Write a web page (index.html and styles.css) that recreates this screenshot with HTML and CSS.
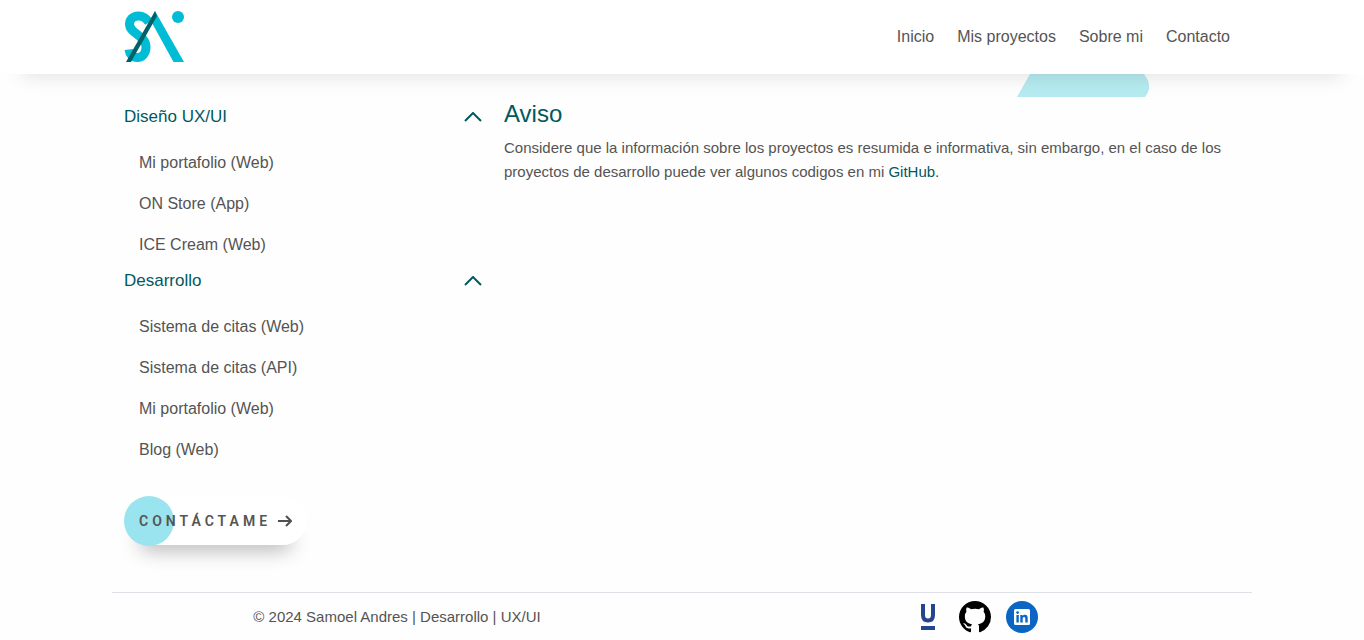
FILE: index.html
```html
<!DOCTYPE html>
<html lang="es">
<head>
<meta charset="utf-8">
<meta name="viewport" content="width=device-width, initial-scale=1">
<title>Samoel Andres | Mis proyectos</title>
<link rel="stylesheet" href="styles.css">
</head>
<body>
<header class="site-header">
  <div class="container header-row">
    <a class="brand" href="#" aria-label="Samoel Andres">
      <svg class="logo" viewBox="0 0 60 52" aria-hidden="true">
        <path d="M25 11.500C22 6.500 18.500 5 14.500 5C8.500 5 5.500 9 5.500 13C5.500 23 22 24 22 36C22 42 18.500 46.500 13 46.500C8.500 46.500 5.500 43 5 38.500" fill="none" stroke="#00bcd4" stroke-width="9"/>
        <path d="M31 0L60 51H49.500L27.500 11Z" fill="#00bcd4"/>
        <path d="M31 0L33 5L7 51H2Z" fill="#00606a"/>
        <circle cx="54" cy="6" r="6" fill="#00bcd4"/>
      </svg>
    </a>
    <nav class="main-nav">
      <a href="#">Inicio</a>
      <a href="#">Mis proyectos</a>
      <a href="#">Sobre mi</a>
      <a href="#">Contacto</a>
    </nav>
  </div>
</header>
<main class="container content">
  <svg class="decoration" viewBox="0 0 132 23" aria-hidden="true"><path d="M13 0H127Q137 12 128 23H0Z" fill="#b5ebf0"/></svg>
  <aside class="sidebar">
    <section>
      <button class="group-toggle" type="button" aria-expanded="true">Diseño UX/UI
        <svg class="chevron" viewBox="0 0 18 10" aria-hidden="true"><path d="M1 9L9 1L17 9"/></svg>
      </button>
      <ul class="group-list">
        <li><a href="#">Mi portafolio (Web)</a></li>
        <li><a href="#">ON Store (App)</a></li>
        <li><a href="#">ICE Cream (Web)</a></li>
      </ul>
    </section>
    <section>
      <button class="group-toggle" type="button" aria-expanded="true">Desarrollo
        <svg class="chevron" viewBox="0 0 18 10" aria-hidden="true"><path d="M1 9L9 1L17 9"/></svg>
      </button>
      <ul class="group-list">
        <li><a href="#">Sistema de citas (Web)</a></li>
        <li><a href="#">Sistema de citas (API)</a></li>
        <li><a href="#">Mi portafolio (Web)</a></li>
        <li><a href="#">Blog (Web)</a></li>
      </ul>
    </section>
    <button class="cta" type="button"><span class="cta-label">CONTÁCTAME</span>
      <svg class="arrow" viewBox="0 0 14 12" aria-hidden="true"><path d="M0 6H13M8 1L13 6L8 11"/></svg>
    </button>
  </aside>
  <article class="notice">
    <h1>Aviso</h1>
    <p>Considere que la información sobre los proyectos es resumida e informativa, sin embargo, en el caso de los proyectos de desarrollo puede ver algunos codigos en mi <a href="#">GitHub.</a></p>
  </article>
</main>
<footer class="container site-footer">
  <p>© 2024 Samoel Andres | Desarrollo | UX/UI</p>
  <div class="social">
    <a href="#" aria-label="Perfil U">
      <svg viewBox="0 0 32 32" aria-hidden="true"><path d="M11 3V14Q11 19.500 16 19.500Q21 19.500 21 14V3" fill="none" stroke="#27458f" stroke-width="4"/><path d="M9 25H23V29H9Z" fill="#27458f"/></svg>
    </a>
    <a href="#" aria-label="GitHub">
      <svg viewBox="0 0 16 16" aria-hidden="true"><path d="M8 0C3.580 0 0 3.580 0 8c0 3.540 2.290 6.530 5.470 7.590.4.070.55-.17.55-.38 0-.19-.01-.82-.01-1.490-2.010.37-2.530-.49-2.690-.94-.09-.23-.48-.94-.82-1.130-.28-.15-.68-.52-.01-.53.63-.01 1.080.58 1.230.82.72 1.210 1.870.87 2.330.66.07-.52.28-.87.51-1.070-1.780-.2-3.640-.89-3.640-3.950 0-.87.31-1.590.82-2.150-.08-.2-.36-1.020.08-2.120 0 0 .67-.21 2.200.82.64-.18 1.320-.27 2-.27s1.360.09 2 .27c1.530-1.040 2.200-.82 2.200-.82.44 1.100.16 1.920.08 2.120.51.56.82 1.270.82 2.150 0 3.070-1.870 3.750-3.650 3.950.29.25.54.73.54 1.480 0 1.070-.01 1.930-.01 2.200 0 .21.15.46.55.38A8.010 8.010 0 0 0 16 8c0-4.420-3.580-8-8-8z"/></svg>
    </a>
    <a href="#" aria-label="LinkedIn">
      <svg viewBox="0 0 32 32" aria-hidden="true"><circle cx="16" cy="16" r="16" fill="#0a66c2"/><rect x="8" y="8" width="16" height="16" rx="1.500" fill="#fff"/><path d="M10.400 14H12.800V21.600H10.400ZM14.300 14H16.600V15.100C17.100 14.200 18 13.800 18.900 13.800C21.200 13.800 21.700 15.300 21.700 17.400V21.600H19.300V17.900C19.300 16.800 19.200 15.900 18.100 15.900C17 15.900 16.700 16.800 16.700 17.800V21.600H14.300Z" fill="#0a66c2"/><circle cx="11.600" cy="11.600" r="1.400" fill="#0a66c2"/></svg>
    </a>
  </div>
</footer>
</body>
</html>
```
FILE: styles.css
```css
* { box-sizing: border-box; }

body {
  margin: 0;
  min-height: 100vh;
  display: flex;
  flex-direction: column;
  background: #fefefe;
  color: #545454;
  font: 16px/24px "Liberation Sans", Arial, sans-serif;
}

a { color: inherit; text-decoration: none; }

.container {
  width: 100%;
  max-width: 1140px;
  margin: 0 auto;
}

.site-header {
  position: relative;
  z-index: 1;
  background: #fff;
  box-shadow: 0 24px 20px -22px rgba(0, 0, 0, 0.12);
}

.header-row {
  display: flex;
  justify-content: space-between;
  align-items: center;
  height: 74px;
  padding: 0 22px 0 12px;
}

.logo { display: block; width: 60px; height: 52px; }

.main-nav { display: flex; gap: 23px; }

.content {
  position: relative;
  display: grid;
  grid-template-columns: 1fr 2fr;
  flex: 1;
}

.decoration {
  position: absolute;
  top: 0;
  right: 103px;
  width: 132px;
  height: 23px;
}

.sidebar { padding: 27px 10px 46px 12px; }

.group-toggle {
  display: flex;
  justify-content: space-between;
  align-items: center;
  width: 100%;
  height: 32px;
  padding: 0;
  border: 0;
  background: none;
  color: #00595f;
  font: inherit;
  font-size: 17px;
}

.chevron {
  width: 18px;
  height: 10px;
  fill: none;
  stroke: #00595f;
  stroke-width: 2;
}

.group-list {
  margin: 0;
  padding: 9px 0 0 15px;
  list-style: none;
  line-height: 41px;
}

.cta {
  position: relative;
  display: flex;
  align-items: center;
  gap: 7px;
  height: 49px;
  margin-top: 26px;
  padding: 0 15px;
  border: 0;
  border-radius: 25px;
  background: #fff;
  box-shadow: 0 20px 20px -15px rgba(0, 0, 0, 0.3);
  color: #545454;
  font: 600 14px/24px Roboto, sans-serif;
}

.cta::before {
  content: "";
  position: absolute;
  top: 0;
  left: 0;
  width: 50px;
  height: 50px;
  border-radius: 50%;
  background: #99e4ee;
}

.cta-label { position: relative; letter-spacing: 4px; }

.arrow {
  width: 14px;
  height: 12px;
  fill: none;
  stroke: #505050;
  stroke-width: 2;
}

.notice { padding: 24px 12px; }

.notice h1 {
  margin: 0 0 6px;
  color: #00595f;
  font-size: 24px;
  font-weight: 400;
  line-height: 32px;
}

.notice p { margin: 0; font-size: 15px; }
.notice a { color: #00595f; }

.site-footer {
  display: grid;
  grid-template-columns: 1fr 1fr;
  align-items: center;
  height: 48px;
  border-top: 1px solid #dee2e6;
  font-size: 15px;
  text-align: center;
}

.site-footer p { margin: 0; }

.social {
  display: flex;
  justify-content: center;
  gap: 15px;
  padding-left: 16px;
}

.social svg { display: block; width: 32px; height: 32px; }
```
